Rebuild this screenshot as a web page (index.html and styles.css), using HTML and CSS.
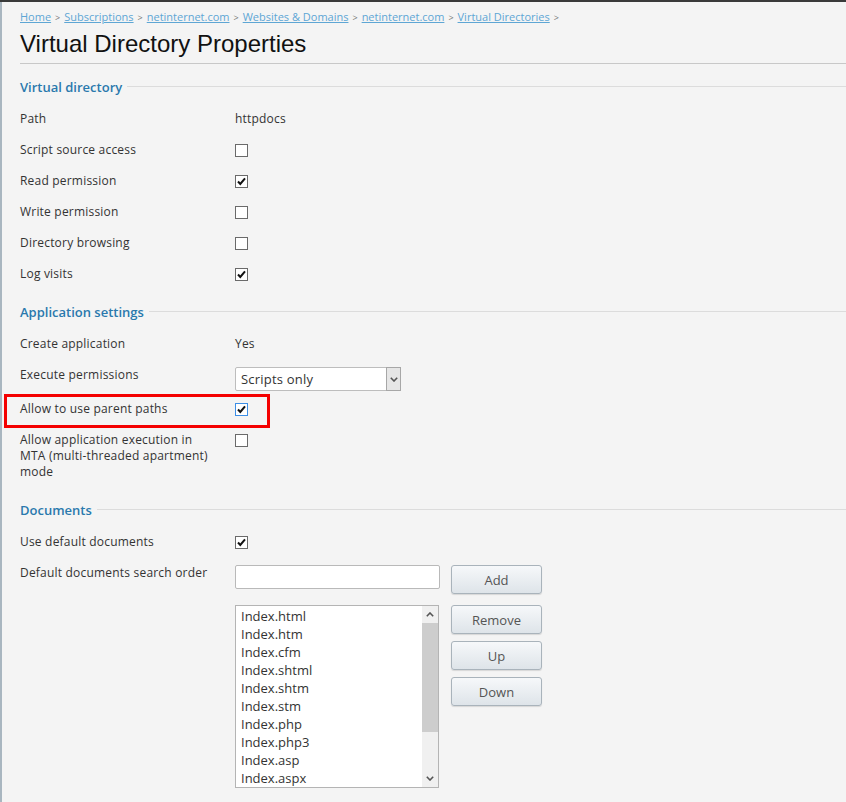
FILE: index.html
```html
<!DOCTYPE html>
<html>
<head>
<meta charset="utf-8">
<link rel="stylesheet" href="styles.css">
</head>
<body>
<div class="topbar"></div>
<div class="page">
  <div class="crumbs">
    <a href="#">Home</a><span class="sep">&gt;</span><a href="#">Subscriptions</a><span class="sep">&gt;</span><a href="#">netinternet.com</a><span class="sep">&gt;</span><a href="#">Websites &amp; Domains</a><span class="sep">&gt;</span><a href="#">netinternet.com</a><span class="sep">&gt;</span><a href="#">Virtual Directories</a><span class="sep">&gt;</span>
  </div>
  <h1 class="title">Virtual Directory Properties</h1>
  <div class="hr"></div>

  <section class="group first">
    <div class="legend"><span>Virtual directory</span></div>
    <div class="row"><div class="label">Path</div><div class="value">httpdocs</div></div>
    <div class="row"><div class="label">Script source access</div><div class="value"><span class="cb"></span></div></div>
    <div class="row"><div class="label">Read permission</div><div class="value"><span class="cb on"><svg viewBox="0 0 11 11"><path d="M2 5.5 L4.3 8 L9 2.3" /></svg></span></div></div>
    <div class="row"><div class="label">Write permission</div><div class="value"><span class="cb"></span></div></div>
    <div class="row"><div class="label">Directory browsing</div><div class="value"><span class="cb"></span></div></div>
    <div class="row"><div class="label">Log visits</div><div class="value"><span class="cb on"><svg viewBox="0 0 11 11"><path d="M2 5.5 L4.3 8 L9 2.3" /></svg></span></div></div>
  </section>

  <section class="group">
    <div class="legend"><span>Application settings</span></div>
    <div class="row"><div class="label">Create application</div><div class="value">Yes</div></div>
    <div class="row sel"><div class="label">Execute permissions</div>
      <div class="value">
        <div class="select"><span class="sel-text">Scripts only</span><span class="sel-arrow"><svg viewBox="0 0 8 5"><path d="M0.8 0.8 L4 4 L7.2 0.8" /></svg></span></div>
      </div>
    </div>
    <div class="row hl"><div class="label">Allow to use parent paths</div><div class="value"><span class="cb on focus"><svg viewBox="0 0 11 11"><path d="M2 5.5 L4.3 8 L9 2.3" /></svg></span></div></div>
    <div class="row"><div class="label">Allow application execution in<br>MTA (multi-threaded apartment)<br>mode</div><div class="value"><span class="cb"></span></div></div>
  </section>

  <section class="group">
    <div class="legend"><span>Documents</span></div>
    <div class="row"><div class="label">Use default documents</div><div class="value"><span class="cb on"><svg viewBox="0 0 11 11"><path d="M2 5.5 L4.3 8 L9 2.3" /></svg></span></div></div>
    <div class="row"><div class="label">Default documents search order</div>
      <div class="value">
        <div class="docs">
          <div class="input"></div>
          <button class="btn">Add</button>
          <div class="listbox">
            <ul class="items">
              <li>Index.html</li>
              <li>Index.htm</li>
              <li>Index.cfm</li>
              <li>Index.shtml</li>
              <li>Index.shtm</li>
              <li>Index.stm</li>
              <li>Index.php</li>
              <li>Index.php3</li>
              <li>Index.asp</li>
              <li>Index.aspx</li>
            </ul>
            <div class="scrollbar">
              <span class="sb-arrow"><svg viewBox="0 0 8 5"><path d="M0.8 4.2 L4 1 L7.2 4.2" /></svg></span>
              <span class="sb-track"><span class="sb-thumb"></span></span>
              <span class="sb-arrow"><svg viewBox="0 0 8 5"><path d="M0.8 0.8 L4 4 L7.2 0.8" /></svg></span>
            </div>
          </div>
          <div class="btns">
            <button class="btn">Remove</button>
            <button class="btn">Up</button>
            <button class="btn">Down</button>
          </div>
        </div>
      </div>
    </div>
  </section>
</div>
</body>
</html>
```

FILE: styles.css
```css
html, body {
  margin: 0;
  padding: 0;
  background: #f4f4f4;
}
body {
  font-family: "Open Sans", "DejaVu Sans", sans-serif;
  font-size: 12px;
  color: #333;
}
.topbar {
  height: 2px;
  background: #3a3a3a;
}
.page {
  border-left: 2px solid #a9b6c0;
  padding: 7px 0 0 18px;
  min-height: 800px;
  box-sizing: border-box;
}
.crumbs {
  font-size: 11px;
  line-height: 16px;
  white-space: nowrap;
}
.crumbs a {
  color: #5ea6d4;
  text-decoration: underline;
}
.crumbs .sep {
  color: #777;
  font-size: 9px;
  margin: 0 4px;
}
.title {
  margin: 4px 0 0;
  font: normal 24px/28px "Liberation Sans", Arial, sans-serif;
  color: #111;
}
.hr {
  margin-top: 5px;
  border-top: 1px solid #c8c8c8;
  margin-bottom: 1px;
}
.group {
  padding-top: 14px;
}
.group.first {
  padding-top: 13px;
}
.legend {
  display: flex;
  gap: 5px;
  color: #2a79ad;
  font-size: 13px;
  font-weight: 600;
  line-height: 18px;
  margin-bottom: 7px;
}
.legend::after {
  content: "";
  flex: 1;
  margin-top: 8px;
  height: 0;
  border-top: 1px solid #dcdcdc;
}
.row {
  display: grid;
  grid-template-columns: 200px 1fr;
  column-gap: 15px;
  padding: 8px 0 7px;
  line-height: 16px;
  min-height: 16px;
}
.row.sel {
  padding-bottom: 2px;
}
.row.hl {
  position: relative;
}
.row.hl::before {
  content: "";
  position: absolute;
  left: -16px;
  top: 1px;
  width: 266px;
  height: 34px;
  border: 3px solid #f40000;
  box-sizing: border-box;
}
.label {
  color: #333;
  letter-spacing: 0.2px;
}
.value {
  color: #333;
  letter-spacing: 0.2px;
}
.cb {
  display: block;
  width: 13px;
  height: 13px;
  box-sizing: border-box;
  border: 1px solid #6a6a6a;
  background: #fff;
  margin: 2px 0 1px;
}
.cb svg {
  display: block;
  width: 11px;
  height: 11px;
  fill: none;
  stroke: #111;
  stroke-width: 2;
}
.cb.focus {
  border-color: #3c8ee6;
}
.select {
  width: 166px;
  height: 24px;
  box-sizing: border-box;
  border: 1px solid #bdbdbd;
  border-radius: 2px;
  background: #fff;
  display: flex;
  align-items: center;
  font-size: 13px;
}
.sel-text {
  padding-left: 5px;
  flex: 1;
}
.sel-arrow {
  width: 15px;
  height: 24px;
  margin: -1px -1px -1px 0;
  box-sizing: border-box;
  border: 1px solid #a7a7a7;
  background: #e6e6e6;
  display: flex;
  align-items: center;
  justify-content: center;
}
.sel-arrow svg {
  width: 8px;
  height: 5px;
  fill: none;
  stroke: #555;
  stroke-width: 1.6;
}
.docs {
  display: grid;
  grid-template-columns: 205px 91px;
  column-gap: 11px;
  row-gap: 11px;
  align-items: start;
  letter-spacing: 0;
}
.input {
  height: 24px;
  box-sizing: border-box;
  border: 1px solid #b9b9b9;
  border-radius: 2px;
  background: #fff;
}
.btn {
  width: 91px;
  height: 29px;
  box-sizing: border-box;
  border: 1px solid #a9b3bb;
  border-radius: 3px;
  background: linear-gradient(#f6f8fa, #dee4e9);
  box-shadow: 0 1px 1px rgba(0, 0, 0, 0.12);
  color: #555;
  font-family: "Open Sans", "DejaVu Sans", sans-serif;
  font-size: 13px;
  padding: 0;
}
.btns {
  display: flex;
  flex-direction: column;
  gap: 7px;
}
.listbox {
  width: 204px;
  height: 183px;
  box-sizing: border-box;
  border: 1px solid #b4b4b4;
  background: #fff;
  display: flex;
}
.items {
  list-style: none;
  margin: 0;
  padding: 1px 0 0 5px;
  flex: 1;
  font-size: 13px;
  line-height: 18px;
  color: #333;
  overflow: hidden;
}
.scrollbar {
  width: 16px;
  background: #f0f0f0;
  display: flex;
  flex-direction: column;
}
.sb-arrow {
  height: 17px;
  display: flex;
  align-items: center;
  justify-content: center;
}
.sb-arrow svg {
  width: 8px;
  height: 5px;
  fill: none;
  stroke: #555;
  stroke-width: 1.6;
}
.sb-track {
  flex: 1;
  display: flex;
  flex-direction: column;
}
.sb-thumb {
  height: 109px;
  background: #cdcdcd;
}
```
